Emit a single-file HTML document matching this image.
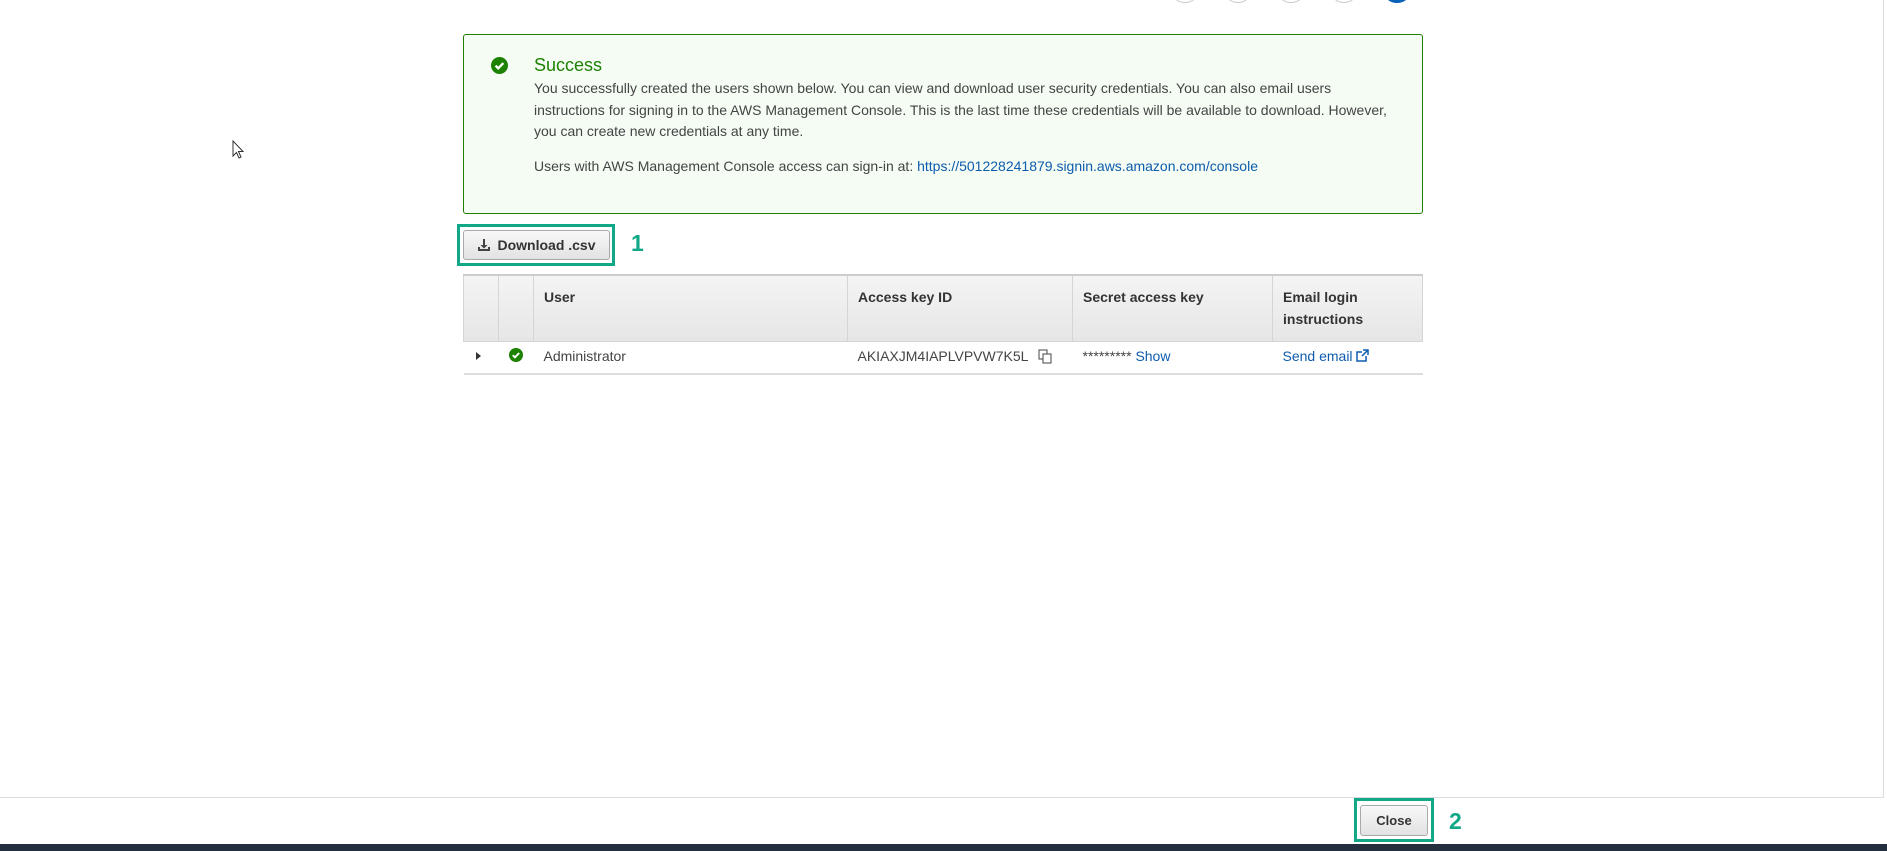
<!DOCTYPE html>
<html><head><style>
*{box-sizing:border-box}
body{margin:0;width:1887px;height:851px;background:#fff;font-family:"Liberation Sans",Arial,sans-serif;color:#444;position:relative;overflow:hidden}
.abs{position:absolute}
.circ{position:absolute;top:-27px;width:30px;height:30px;border-radius:50%;border:1px solid #ccc;background:#fff}
.box{left:463px;top:34px;width:960px;height:180px;border:1px solid #1d8102;border-radius:3px;background:#f4fcf4}
.t{font-size:14px;line-height:21.6px;color:#444}
a{color:#0e5cad;text-decoration:none}
.btn{position:absolute;border:1px solid #aaa;border-radius:3px;background:linear-gradient(#f8f8f8,#e2e2e2);font-weight:bold;font-size:14px;color:#333;display:flex;align-items:center;justify-content:center}
.hl{position:absolute;border:3px solid #11a888}
.num{position:absolute;color:#11a888;font-weight:900;font-size:23px}
table{position:absolute;left:463px;top:274px;width:960px;border-collapse:collapse;font-size:14px}
th{background:linear-gradient(#f4f4f4,#e6e6e6);height:66px;text-align:left;vertical-align:top;padding:10px 10px;border:1px solid #d5d5d5;border-top:2px solid #ccc;font-weight:bold;color:#333;line-height:22px}
td{height:33px;padding:0 10px 2px;border-bottom:2px solid #ddd;color:#444}
</style></head><body>
<div class="circ" style="left:1170px"></div>
<div class="circ" style="left:1223px"></div>
<div class="circ" style="left:1276px"></div>
<div class="circ" style="left:1329px"></div>
<div class="circ" style="left:1382px;background:#0a62b8;border-color:#0a62b8"></div>

<svg class="abs" style="left:232px;top:140px" width="14" height="20" viewBox="0 0 14 20"><path d="M1 1 L1 16 L4.5 12.5 L7 18 L9 17 L6.5 11.5 L11 11.5 Z" fill="#fff" stroke="#333" stroke-width="1"/></svg>

<div class="abs box"></div>
<svg class="abs" style="left:491px;top:57px" width="17" height="17" viewBox="0 0 16 16"><circle cx="8" cy="8" r="8" fill="#1d8102"/><path d="M4.3 8.2l2.5 2.5 4.8-5" stroke="#fff" stroke-width="2.2" fill="none"/></svg>
<div class="abs" style="left:534px;top:55px;font-size:18px;color:#1d8102">Success</div>
<div class="abs t" style="left:534px;top:78px;width:870px">You successfully created the users shown below. You can view and download user security credentials. You can also email users instructions for signing in to the AWS Management Console. This is the last time these credentials will be available to download. However, you can create new credentials at any time.</div>
<div class="abs t" style="left:534px;top:156px">Users with AWS Management Console access can sign-in at: <a>https://501228241879.signin.aws.amazon.com/console</a></div>

<div class="hl" style="left:457px;top:224px;width:158px;height:42px"></div>
<div class="btn" style="left:463px;top:230px;width:147px;height:30px"><svg width="14" height="14" viewBox="0 0 14 14" style="margin-right:6px"><path d="M6 1h2v6h2.5L7 10.5 3.5 7H6z" fill="#444"/><path d="M1 9v4h12V9h-2v2H3V9z" fill="#444"/></svg>Download .csv</div>
<div class="num" style="left:631px;top:230px">1</div>

<table>
<tr><th style="width:35px"></th><th style="width:35px"></th><th style="width:314px">User</th><th style="width:225px">Access key ID</th><th style="width:200px">Secret access key</th><th>Email login<br>instructions</th></tr>
<tr><td><svg width="8" height="10"><path d="M2 1l5 4-5 4z" fill="#333"/></svg></td>
<td><svg width="14" height="14" viewBox="0 0 16 16"><circle cx="8" cy="8" r="8" fill="#1d8102"/><path d="M4.3 8.2l2.5 2.5 4.8-5" stroke="#fff" stroke-width="2.2" fill="none"/></svg></td>
<td>Administrator</td><td>AKIAXJM4IAPLVPVW7K5L <svg width="14" height="15" viewBox="0 0 14 15" style="vertical-align:-3px;margin-left:6px"><rect x="1" y="1" width="8" height="9" fill="none" stroke="#444"/><rect x="5" y="5" width="8" height="9" fill="#fff" stroke="#444"/></svg></td>
<td>********* <a>Show</a></td><td><a>Send email <svg width="13" height="13" viewBox="0 0 13 13" style="vertical-align:-1px"><path d="M10 7v5H1V3h5" fill="none" stroke="#0e5cad" stroke-width="1.5"/><path d="M7 1h5v5M12 1L6 7" fill="none" stroke="#0e5cad" stroke-width="1.5"/></svg></a></td></tr>
</table>

<div class="abs" style="left:0;top:797px;width:1884px;height:1px;background:#ddd"></div>
<div class="abs" style="left:1883px;top:0;width:1px;height:798px;background:#ddd"></div>
<div class="hl" style="left:1354px;top:798px;width:80px;height:44px"></div>
<div class="btn" style="left:1360px;top:805px;width:68px;height:31px;font-size:13px">Close</div>
<div class="num" style="left:1449px;top:808px">2</div>
<div class="abs" style="left:0;top:844px;width:1887px;height:7px;background:#232f3e"></div>
</body></html>
